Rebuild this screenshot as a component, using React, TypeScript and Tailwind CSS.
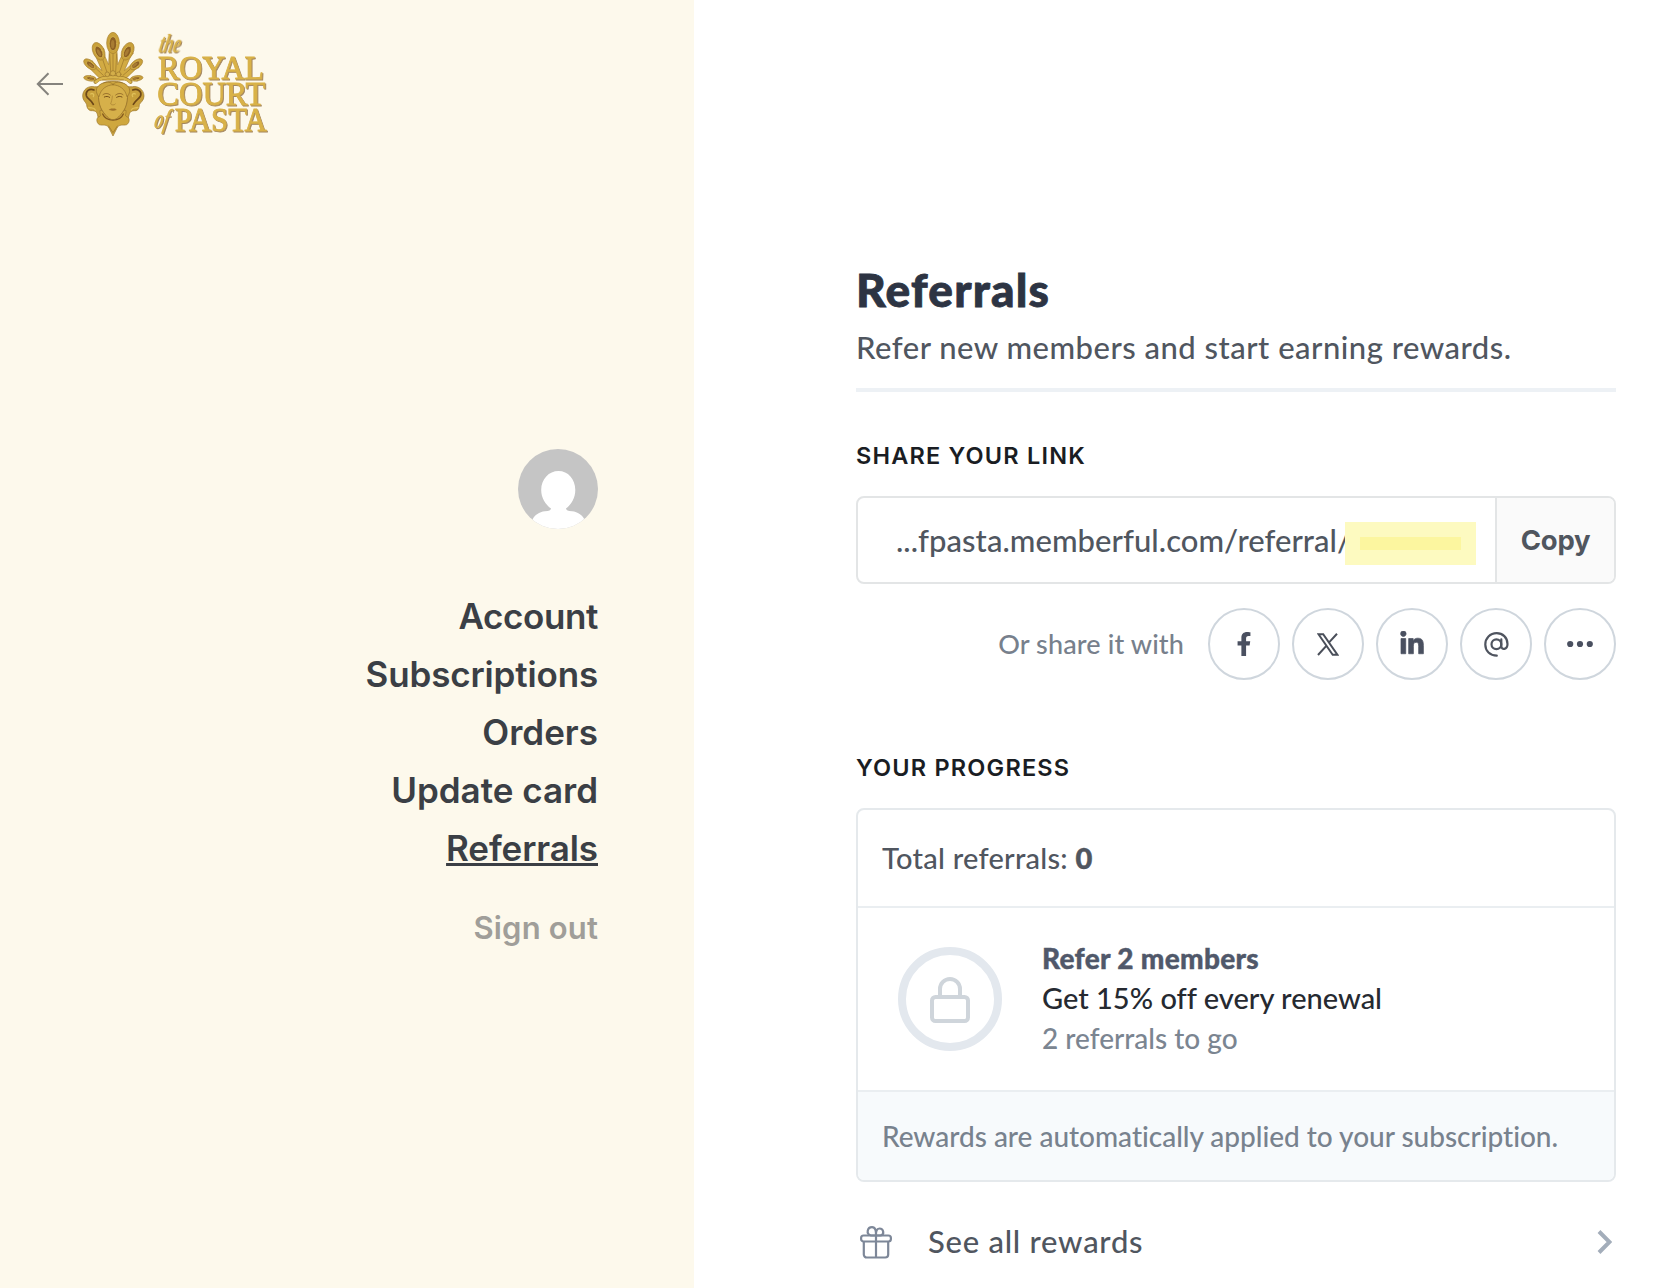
import { FaFacebookF, FaLinkedinIn } from "react-icons/fa";
import clsx from "clsx";

interface NavItemTypes {
  label: string;
  className?: string;
  isActive?: boolean;
}

const navItems: NavItemTypes[] = [
  { label: "Account", className: "tracking-[-0.4px]" },
  { label: "Subscriptions", className: "tracking-[-0.15px]" },
  { label: "Orders" },
  { label: "Update card" },
  { label: "Referrals", className: "tracking-[-0.1px]", isActive: true },
];

const BackArrow = () => (
  <svg width="28" height="24" viewBox="0 0 28 24" fill="none" stroke="#85837d" strokeWidth="2">
    <path d="M27 12H2M12.5 1.2 1.8 12l10.7 10.8" />
  </svg>
);

const Feather = ({ x, y, rx, ry, angle }: { x: number; y: number; rx: number; ry: number; angle: number }) => (
  <g transform={`translate(${x} ${y}) rotate(${angle})`}>
    <ellipse rx={rx} ry={ry} fill="#c9a13a" stroke="#a98232" strokeWidth="2" />
    <ellipse rx={rx * 0.6} ry={ry * 0.66} cy={2} fill="#8d6024" stroke="#dcbb56" strokeWidth="2" />
    <ellipse rx={rx * 0.26} ry={ry * 0.4} cx={-1} cy={4} fill="#a87c33" />
  </g>
);

const QueenMark = () => (
  <g strokeLinejoin="round" strokeLinecap="round">
    {/* feather stems */}
    <path
      d="M244 180 198 134l14-12 34 30-22-50 22-12 20 44 3-76h20l4 76 20-44 22 12-22 50 34-30 14 12-48 46Z"
      fill="#d2ab43"
      stroke="#a98232"
      strokeWidth="2"
    />
    <path
      d="M262 160 246 112M272 156l-3-54M279 156V96M287 156l3-54M297 160l17-48M250 166l-30-28M309 166l32-28"
      stroke="#9a742b"
      strokeWidth="2"
      fill="none"
    />
    <Feather x={279} y={69} rx={19} ry={32} angle={0} />
    <Feather x={236} y={94} rx={17} ry={28} angle={-25} />
    <Feather x={323} y={94} rx={17} ry={28} angle={25} />
    <Feather x={210} y={133} rx={12} ry={22} angle={-52} />
    <Feather x={349} y={133} rx={12} ry={22} angle={52} />
    <Feather x={210} y={175} rx={8} ry={19} angle={-82} />
    <Feather x={350} y={175} rx={8} ry={19} angle={82} />

    {/* side curls */}
    <path
      d="M222 200c-16-4-34 8-34 28 0 14 10 18 12 26 0 8 4 16 12 18 8 0 14 0 18 6 5 8 2 20 12 26h76c10-6 7-18 12-26 4-6 10-6 18-6 8-2 10-10 10-18 4-8 14-12 14-26 0-20-20-32-34-28Z"
      fill="#c8a03b"
      stroke="#9c772d"
      strokeWidth="2"
    />
    <path
      d="M222 210c-14-6-26 4-23 17 3 10 15 12 21 26M338 210c14-6 28 4 24 17-4 10-15 12-22 26"
      fill="none"
      stroke="#6d4818"
      strokeWidth="5"
    />
    <path
      d="M212 222c6-4 12 2 8 8M346 222c-6-4-12 2-8 8M206 262c8 4 16-2 20 8M354 262c-8 4-16-2-20 8"
      fill="none"
      stroke="#dfbf58"
      strokeWidth="4"
    />

    {/* neck and collar */}
    <path
      d="M240 272c-2 10 6 14-2 18-10 2-10 18 0 24 12 4 22-4 30 12l11 22 11-22c8-16 18-8 30-12 10-6 10-22 0-24-8-4 0-8-2-18Z"
      fill="#cfa73e"
      stroke="#9c772d"
      strokeWidth="2"
    />
    <path d="M248 282c10 24 52 24 62 0" fill="none" stroke="#83591f" strokeWidth="4" />
    <path d="m266 318 13 20 13-20" fill="none" stroke="#a17a2e" strokeWidth="2.500" />

    {/* face */}
    <path
      d="M237 200c0-18 84-18 84 0 4 30 2 58-14 78-10 13-18 21-28 21s-18-8-28-21c-16-20-18-48-14-78Z"
      fill="#d6b04a"
      stroke="#946f2a"
      strokeWidth="2.500"
    />
    <path
      d="M279 194c-20 2-36 12-42 36-8-8-12-22-2-32 12-12 30-14 44-14s32 2 44 14c10 10 6 24-2 32-6-24-22-34-42-36Z"
      fill="#cfa840"
      stroke="#946f2a"
      strokeWidth="2"
    />
    <path d="M279 193c-6-7-18-9-28-4M279 193c6-7 18-9 28-4" fill="none" stroke="#946f2a" strokeWidth="2" />
    <path d="M249 224c7-6 16-4 22 1M287 225c6-5 15-7 22-1" fill="none" stroke="#8a6223" strokeWidth="2.500" />
    <path d="M253 231c6-3 11-2 16 1M290 232c5-3 10-4 16-1" fill="none" stroke="#765019" strokeWidth="3" />
    <path d="M277 228c0 10-4 20-5 24 3 4 11 4 14 0" fill="none" stroke="#a57d31" strokeWidth="2" />
    <path d="M269 269c4-3 7-4 10-2 3-2 6-1 10 2-6 3-14 3-20 0Z" fill="#a3742e" stroke="#946b29" strokeWidth="1.500" />

    {/* headband */}
    <path d="M226 186c18-20 88-20 106 0" fill="none" stroke="#9c772d" strokeWidth="11" />
    <path d="M227 186c18-19 86-19 104 0" fill="none" stroke="#d8b44c" strokeWidth="8" />
    <circle cx="262" cy="163" r="7" fill="#d3ae49" stroke="#9c772d" strokeWidth="2" />
    <circle cx="279" cy="160" r="8" fill="#d3ae49" stroke="#9c772d" strokeWidth="2" />
    <circle cx="296" cy="163" r="7" fill="#d3ae49" stroke="#9c772d" strokeWidth="2" />
  </g>
);

const Wordmark = () => (
  <g
    fill="#d9b248"
    stroke="#d9b248"
    strokeWidth="2.500"
    className="font-['Liberation_Serif',serif] drop-shadow-[3px_3px_0_#a5875e]"
    fontSize="102"
  >
    <g fontStyle="italic" fontWeight="bold" strokeWidth="0">
      <text transform="translate(414 96) skewX(-12)" fontSize="80" textLength="64" lengthAdjust="spacingAndGlyphs">the</text>
      <text transform="translate(400 324) skewX(-12)" fontSize="82" textLength="44" lengthAdjust="spacingAndGlyphs">of</text>
    </g>
    <text x="414" y="176" textLength="318" lengthAdjust="spacingAndGlyphs">ROYAL</text>
    <text x="412" y="254" textLength="324" lengthAdjust="spacingAndGlyphs">COURT</text>
    <text x="464" y="332" textLength="276" lengthAdjust="spacingAndGlyphs">PASTA</text>
  </g>
);

const Logo = () => (
  <svg width="188" height="108" viewBox="186 30 564 324" className="overflow-visible">
    <QueenMark />
    <Wordmark />
  </svg>
);

const Avatar = () => (
  <svg width="80" height="80" viewBox="0 0 80 80">
    <clipPath id="avatar-clip">
      <circle cx="40" cy="40" r="40" />
    </clipPath>
    <g clipPath="url(#avatar-clip)">
      <rect width="80" height="80" fill="#c5c5c5" />
      <path
        d="M40.500 22C50 22 57.300 30 57.300 41c0 8-4 14.500-9.300 18.500 0 1.800 2 2.300 6 2.800 6 .7 10 3.700 12.500 8.200V80H14.500V70.500c2.500-4.500 6.500-7.500 12.500-8.200 4-.5 6-1 6-2.800-5.500-4-9.800-10.500-9.800-18.500 0-11 7.800-19 17.300-19Z"
        fill="#fff"
      />
    </g>
  </svg>
);

const XIcon = () => (
  <svg width="22" height="23" viewBox="0 0 22 23" fill="none" stroke="#4a4f5a" strokeWidth="2">
    <path d="M1.500 1.200h4.700l14.200 20.600h-4.700ZM20 .7l-8.600 9.400M9.300 12.800 1 22" />
  </svg>
);

const AtIcon = () => (
  <svg width="25" height="25" viewBox="0 0 25 25" fill="none" stroke="#4f545f" strokeWidth="2.200" strokeLinecap="round">
    <circle cx="12.400" cy="12.200" r="4.900" />
    <path d="M17.300 7.400v6.600c0 4.400 6.200 3.800 6.200-2C23.500 5.500 18.600 1.200 12.700 1.200 6 1.200 1.300 6.200 1.300 12.500c0 6.500 4.700 11.200 11.500 11.200" />
  </svg>
);

const DotsIcon = () => (
  <svg width="26" height="8" viewBox="0 0 26 8" fill="#4a5060">
    <circle cx="3.200" cy="4" r="3.100" />
    <circle cx="13" cy="4" r="3.100" />
    <circle cx="22.800" cy="4" r="3.100" />
  </svg>
);

const LockIcon = () => (
  <svg width="40" height="46" viewBox="0 0 40 46" fill="none" stroke="#cfd5db" strokeWidth="4" className="mt-px">
    <rect x="2" y="20" width="36" height="24" rx="3.500" />
    <path d="M10 20v-8a10 10 0 0 1 20 0v8" />
  </svg>
);

const GiftIcon = () => (
  <svg width="32" height="33" viewBox="0 0 32 33" fill="none" stroke="#7d8798" strokeWidth="2.200" strokeLinejoin="round">
    <rect x="1.100" y="9.500" width="29.800" height="6" rx="2.500" />
    <path d="M3.800 15.500v13a3 3 0 0 0 3 3h18.400a3 3 0 0 0 3-3v-13M16 9.500v22" />
    <path d="M16 9.500h-5C5.500 8 7.500 1.200 12 1.200c3.500 0 4.200 3.800 4 8.300ZM16 9.500h4.500c4.500-1 3-7-1-7-3 0-3.700 3-3.500 7Z" />
  </svg>
);

const ShareButton = ({ label, children }: { label: string; children: React.ReactNode }) => (
  <button
    aria-label={label}
    className="flex size-[72px] items-center justify-center rounded-full border-2 border-[#cfd6dd] text-[#4a5060]"
  >
    {children}
  </button>
);

const SectionTitle = ({ children }: { children: React.ReactNode }) => (
  <h2 className="font-['Inter',sans-serif] text-[23.500px] leading-8 font-semibold tracking-[1.2px] text-[#1a1d23] uppercase">
    {children}
  </h2>
);

const Sidebar = () => (
  <aside className="w-[694px] shrink-0 bg-[#fdf9ec] font-['Inter',sans-serif]">
    <header className="flex items-center gap-[18px] pt-[30px] pl-9">
      <BackArrow />
      <Logo />
    </header>
    <div className="mt-[311px] flex flex-col items-end pr-24">
      <Avatar />
      <nav className="mt-[58px] flex flex-col items-end">
        {navItems.map((item) => (
          <a
            key={item.label}
            className={clsx(
              "text-[35px] leading-[58px] font-semibold text-[#3b3f45]",
              item.className,
              item.isActive && "underline decoration-3 underline-offset-[2px]"
            )}
          >
            {item.label}
          </a>
        ))}
      </nav>
      <a className="mt-[31px] text-[31px] leading-10 font-semibold tracking-[0.15px] text-[#a09e99]">Sign out</a>
    </div>
  </aside>
);

const App: React.FC = () => {
  return (
    <div className="flex h-[1288px] w-[1674px] overflow-hidden bg-white">
      <Sidebar />
      <main className="ml-[162px] w-[760px] pt-[260px] font-['Lato',sans-serif] font-medium text-[#50565f] [font-variant-ligatures:none]">
        <div className="border-b-4 border-[#edf1f5] pb-[17px]">
          <h1 className="text-[46px] leading-[60px] font-black tracking-[1.2px] text-[#2d3443] [-webkit-text-stroke:0.8px]">
            Referrals
          </h1>
          <p className="mt-[3px] text-[31px] leading-[48px] tracking-[0.5px]">
            Refer new members and start earning rewards.
          </p>
        </div>

        <div className="mt-12">
          <SectionTitle>Share your link</SectionTitle>
        </div>
        <div className="mt-6 flex h-[88px] overflow-hidden rounded-lg border-2 border-[#e3e5e6]">
          <div className="flex flex-1 items-center pl-[38px]">
            <span className="w-[449px] text-[31px] tracking-[0.05px] whitespace-nowrap">
              ...fpasta.memberful.com/referral/
            </span>
            <span className="z-10 mt-[7px] flex h-[43px] w-[131px] items-center justify-center bg-[#fdfac0]">
              <span className="h-[13px] w-[101px] bg-[#fcf69f]" />
            </span>
          </div>
          <button className="w-[119px] border-l-2 border-[#e3e5e6] bg-[#fafafa] pt-0.5 font-['Inter',sans-serif] text-[27.500px] font-bold tracking-[-0.3px]">
            Copy
          </button>
        </div>

        <div className="mt-6 flex items-center justify-end gap-3">
          <span className="mt-px mr-3 text-[27px] tracking-[0.13px] text-[#77808c]">Or share it with</span>
          <ShareButton label="Facebook">
            <FaFacebookF size={24} />
          </ShareButton>
          <ShareButton label="X">
            <XIcon />
          </ShareButton>
          <ShareButton label="LinkedIn">
            <FaLinkedinIn size={26} stroke="currentColor" strokeWidth={14} />
          </ShareButton>
          <ShareButton label="Email">
            <AtIcon />
          </ShareButton>
          <ShareButton label="More">
            <DotsIcon />
          </ShareButton>
        </div>

        <div className="mt-[72px]">
          <SectionTitle>Your progress</SectionTitle>
        </div>
        <div className="mt-6 overflow-hidden rounded-lg border-2 border-[#e5e9ec]">
          <div className="h-[98px] border-b-2 border-[#eaeef1] px-6 text-[29px] leading-[95px] tracking-[0.25px]">
            Total referrals: <b className="font-black [-webkit-text-stroke:0.5px]">0</b>
          </div>
          <div className="flex h-[184px] items-center gap-10 border-b-2 border-[#eaeef1] pl-10">
            <div className="flex size-[104px] items-center justify-center rounded-full border-8 border-[#e3e8ee]">
              <LockIcon />
            </div>
            <div className="pb-[3px] leading-10">
              <p className="text-[28px] font-black tracking-[0.3px] text-[#50586a] [-webkit-text-stroke:0.4px]">
                Refer 2 members
              </p>
              <p className="text-[29px] text-[#262a31]">Get 15% off every renewal</p>
              <p className="text-[28px] text-[#7b8591]">2 referrals to go</p>
            </div>
          </div>
          <div className="h-[88px] bg-[#f7fafc] px-6 text-[28px] leading-[88px] tracking-[-0.02px] whitespace-nowrap text-[#78828e]">
            Rewards are automatically applied to your subscription.
          </div>
        </div>

        <a className="mt-[35px] flex h-12 items-center px-1">
          <span className="pt-0.5">
            <GiftIcon />
          </span>
          <span className="ml-9 flex-1 text-[31px] tracking-[0.75px]">See all rewards</span>
          <svg width="16" height="24" viewBox="0 0 16 24" fill="none" stroke="#a3adba" strokeWidth="4" className="mt-0.5">
            <path d="m3 1.500 10.500 10.500L3 22.500" />
          </svg>
        </a>
      </main>
    </div>
  );
};

export default App;
